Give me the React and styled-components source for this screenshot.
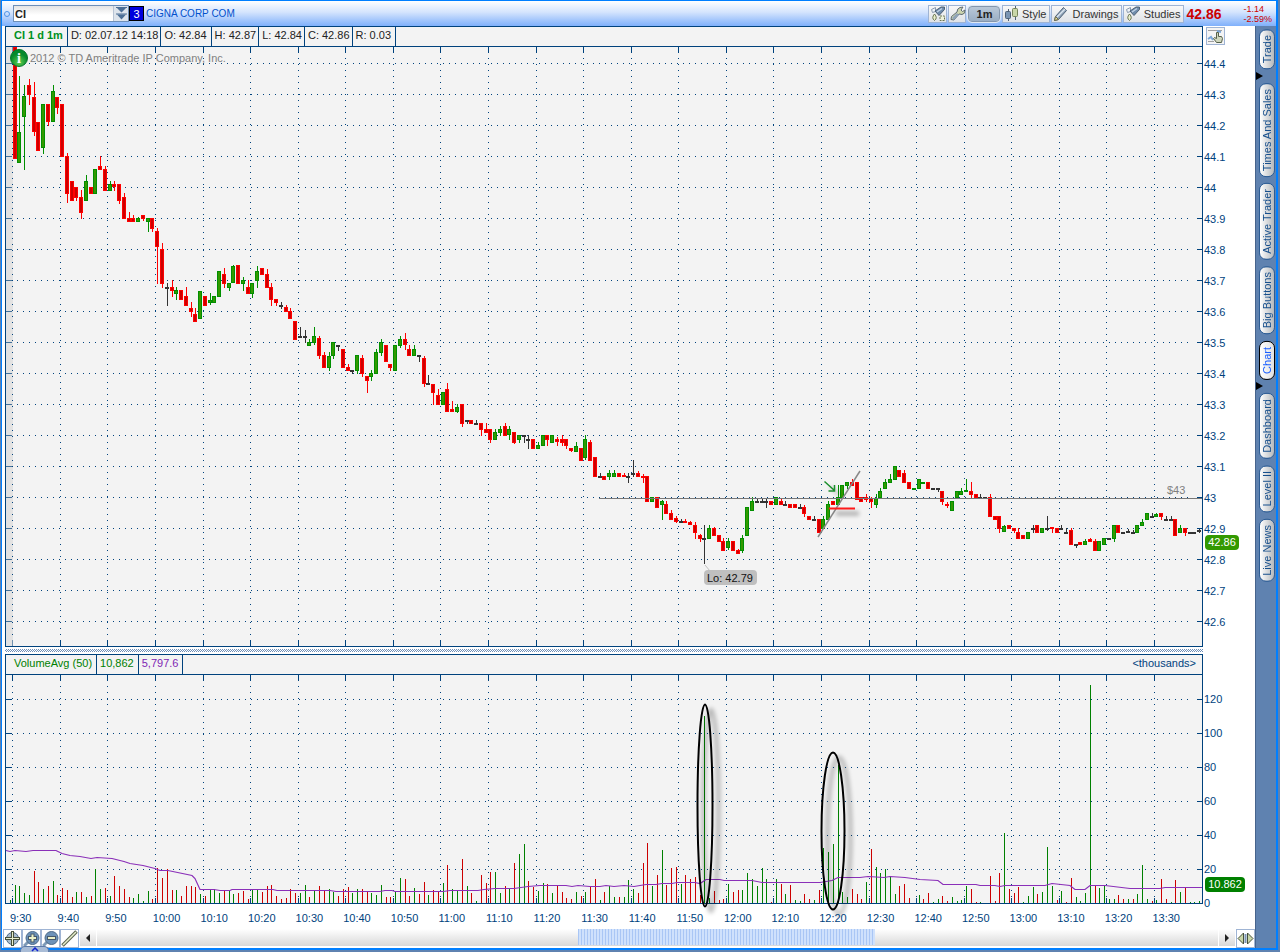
import React, { useState } from "react";
import styled, { createGlobalStyle } from "styled-components";

const GlobalStyle = createGlobalStyle`
  * {
    box-sizing: border-box;
  }
  body {
    margin: 0;
    background: #5f82b0;
    font-family: "Liberation Sans", Arial, sans-serif;
    font-size: 11px;
    color: #00427d;
  }
  button, input {
    font: inherit;
    margin: 0;
    padding: 0;
  }
`;

const NAVY = "#00427d";
const TONES = { r: "#ff0000", g: "#008f00", k: "#333333" };
const FILLS = { r: "#cc0000", g: "#339900", k: "#333333" };

// One candle per minute: color, high, body top, body bottom, low
const CANDLES = `
r 47 47 159 159|g 76 132 163 163|g 85 96 117 170|r 79 85 95 105|r 82 97 132 136|r 122 122 151 151|g 104 104 148 154|r 104 104 122 126|g 85 91 122 122|r 97 97 108 114
r 104 104 157 157|r 153 156 194 203|r 181 181 201 201|r 187 187 198 201|r 190 197 213 219|g 175 181 201 201|r 187 187 194 194|g 169 169 194 194|r 156 166 170 170|r 166 169 191 191
g 181 184 191 191|r 181 184 187 191|r 184 184 201 204|r 193 197 219 219|r 212 218 222 222|r 215 218 222 222|g 217 218 222 222|r 215 215 219 221|g 218 218 222 232|r 218 218 229 232
r 228 231 247 284|r 243 249 284 288|k 283 287 289 306|r 280 287 291 297|g 287 290 294 300|r 290 290 300 300|r 287 296 306 306|r 302 308 312 317|r 308 314 322 322|g 291 291 319 319
r 296 296 306 306|g 293 300 303 305|g 296 296 303 303|g 271 271 297 297|r 268 274 284 288|g 283 283 288 291|g 265 266 283 283|r 265 265 284 284|g 277 280 284 291|r 280 287 294 294
g 283 283 294 298|g 266 271 281 288|r 268 268 275 275|r 269 274 288 288|r 283 287 300 306|r 299 299 303 306|k 302 305 307 309|r 305 307 312 312|r 308 311 319 319|r 321 321 340 340
k 327 336 338 338|k 330 336 338 343|g 339 342 346 346|g 327 336 343 345|r 336 338 356 359|r 352 355 368 368|g 352 356 368 371|g 342 342 356 359|k 345 345 347 351|r 349 349 368 368
r 364 367 371 371|k 370 370 372 374|g 355 355 371 374|r 355 358 374 377|r 376 376 381 393|g 370 373 377 381|g 349 352 374 374|g 339 342 353 356|r 345 345 362 362|r 364 364 368 371
g 345 345 371 371|g 336 339 346 348|r 333 339 345 350|r 345 349 356 356|g 345 349 356 356|k 355 355 357 362|r 356 358 384 387|k 375 383 385 385|r 384 384 393 405|r 389 395 405 405
g 392 392 405 405|r 383 389 412 412|r 401 409 412 412|g 404 407 412 413|r 404 404 424 427|k 420 420 422 424|r 420 420 424 424|k 420 423 425 425|r 423 423 430 436|r 423 429 433 433
r 429 429 440 443|g 429 432 440 440|g 426 429 433 436|r 423 426 436 436|g 426 429 435 440|r 432 432 443 444|g 435 435 440 443|k 435 435 437 443|k 435 439 441 449|r 439 439 449 449
g 442 445 449 449|g 435 435 446 446|r 435 435 440 446|g 435 435 443 443|r 437 439 442 446|r 435 439 443 446|r 439 439 446 449|r 448 448 451 452|g 442 446 452 452|r 448 448 461 461
g 435 439 458 460|r 440 442 461 461|r 457 457 477 477|k 473 476 478 478|r 476 476 480 480|g 470 473 477 480|g 470 473 477 477|r 473 473 477 477|r 473 475 477 477|k 473 476 478 483
k 460 473 475 477|r 471 473 477 477|r 474 476 478 483|r 476 476 502 502|g 497 497 502 502|r 497 497 508 508|g 500 501 505 520|r 501 504 514 514|r 510 513 520 520|r 516 518 522 523
k 519 521 523 523|r 519 521 523 523|r 521 522 525 525|r 522 525 533 539|r 534 535 539 542|k 525 538 540 564|g 525 528 539 539|r 527 528 536 536|r 535 535 542 542|r 538 541 551 551
g 538 541 548 550|r 541 541 551 551|r 549 550 554 554|g 535 538 551 553|g 507 507 536 536|g 497 501 511 511|k 499 501 503 503|k 499 501 503 503|k 499 501 503 508|r 501 501 505 505
g 497 497 505 505|r 499 501 505 505|k 501 504 506 506|r 504 504 508 508|r 504 504 508 508|k 504 507 509 509|r 505 507 514 517|r 516 516 520 520|k 516 519 521 521|r 519 519 533 533
g 516 519 529 529|g 501 504 520 520|r 501 501 505 505|g 485 497 505 505|g 485 485 498 498|g 482 482 486 489|r 479 482 486 486|r 482 482 500 500|r 497 497 502 502|r 494 497 500 502
r 497 498 502 508|g 494 498 505 508|g 488 491 498 498|g 479 482 489 489|g 474 479 483 483|g 466 466 480 480|r 470 470 477 477|r 470 473 483 483|r 482 482 489 489|g 488 488 490 490
g 479 479 489 489|g 482 482 484 484|r 482 482 489 489|k 488 488 490 490|k 488 488 490 492|r 491 491 502 505|r 502 504 506 508|g 501 501 511 511|g 491 491 498 498|g 488 491 495 495
g 479 490 492 492|r 482 491 495 498|r 494 494 498 498|k 494 497 499 499|k 497 497 499 499|r 494 497 517 517|r 516 516 520 520|r 516 516 529 533|g 525 526 532 532|r 525 525 529 529
r 528 528 531 533|r 528 532 539 539|r 535 535 539 539|g 532 532 539 539|k 525 528 530 533|r 525 525 533 533|g 528 528 533 533|k 516 528 530 531|r 527 527 529 533|r 528 528 533 533
k 525 528 530 530|k 528 532 534 534|r 528 530 545 545|k 544 544 546 548|r 542 542 545 545|g 539 541 545 545|r 538 539 542 542|r 539 541 551 551|g 541 541 551 551|g 538 538 545 545
k 538 538 540 540|g 525 525 539 542|r 525 525 533 533|k 532 532 534 534|k 529 531 533 533|k 530 532 534 534|g 525 525 533 533|g 519 522 526 526|g 513 513 520 520|k 513 516 518 518
g 513 514 517 517|r 513 513 517 520|k 516 519 521 521|k 516 519 521 521|r 519 519 536 536|g 525 528 533 533|r 528 528 533 536|k 532 532 534 534|k 532 532 534 534|k 529 530 532 533
`
  .trim()
  .split(/[|\n]/)
  .map((row) => {
    const [tone, ...values] = row.split(" ");
    return [tone, ...values.map(Number)];
  });

// Volume per minute: color and bar height
const VOLUMES = `
g18 g17 g10 g8 r32 r21 g14 r17 g22 r8 r15 r13 r6 g11 r11 g6 r7 g34 g14 r15 g7 r27 r17 r14 r6
g5 g9 g2 g12 r4 r35 r25 r34 r13 g13 r7 r17 r17 r16 g9 r7 g14 g14 g10 r12 g12 g9 r10 r12 r4
g14 g13 r11 r17 r18 r7 r4 r5 r14 r10 g10 g18 r6 g12 r17 r12 g14 g11 r7 r14 r16 g10 g14 r14 r12
g10 g8 g18 r6 r6 g12 g25 r24 r7 g15 r9 r21 g8 r13 r11 g20 r38 g14 g12 r44 g17 r10 g2 r28 r20
r31 g31 g10 r17 g15 r40 g49 g59 r22 r16 g12 g20 r19 g10 r17 r11 r5 r4 g11 r7 g11 r17 r24 g3 r11
g17 g6 r6 g6 g23 g14 r10 r40 r60 g17 r28 g53 r18 r35 r36 g19 r28 r24 r26 r8 g187 g5 r12 r3 r4
g19 r11 r13 g13 g30 g24 g17 g35 g24 r1 g24 r19 g9 r18 g3 g2 r9 r4 g3 r13 g55 g51 g59 g138 g11
g6 r14 r9 r4 g21 r54 g36 g30 g34 g27 g9 r17 r19 r5 g0 g8 r4 r10 g1 g4 r7 r2 g6 g2 g3
g17 r14 r1 g1 g0 r27 r2 r30 g70 r14 r10 r16 g1 g7 g16 r9 g11 g56 g17 r3 g12 r1 r25 g6 g2
g10 g218 r17 g15 g17 g4 g4 r8 r4 g4 r4 g9 g38 g4 r2 g3 r24 r4 g1 r23 g11 r16 g1 g1 g2
`
  .trim()
  .split(/\s+/)
  .map((bar) => [bar[0], Number(bar.slice(1))]);

const AVERAGE =
  "6,850 10,851 15,850 26,851 33,850 56,850 62,853 70,855 80,856 91,858 97,857 112,858 124,861 130,863 143,865 155,868 160,870 168,870 192,875 195,878 200,889 214,889 220,890 230,890 232,889 273,889 277,890 330,890 336,891 380,891 385,890 392,890 395,891 443,891 450,890 478,890 484,889 495,888 514,888 528,886 540,885 566,885 572,886 578,885 590,886 600,886 606,885 614,886 624,885 634,886 640,885 646,884 656,884 662,883 672,883 677,882 695,882 700,883 706,879 720,879 724,880 752,880 762,882 820,882 832,880 838,877 860,877 868,876 884,877 890,876 905,877 920,879 938,880 943,884 976,884 980,885 995,885 1000,886 1005,885 1045,885 1052,883 1070,885 1075,889 1085,889 1090,885 1105,885 1130,888 1160,888 1165,887 1202,887";

const PRICES = Array.from({ length: 19 }, (_, i) => String((444 - i) / 10));
const VOLUME_LEVELS = [120, 100, 80, 60, 40, 20, 0];
const TIMES = Array.from({ length: 25 }, (_, i) => {
  const minutes = 570 + i * 10;
  return `${Math.floor(minutes / 60)}:${String(minutes % 60).padStart(2, "0")}`;
});

const barX = (i) => Math.floor(15 + i * 4.758);
const gridX = (i) => Math.floor(12.8 + i * 47.57) + 0.5;
const priceY = (i) => Math.floor(63 + i * 31.03) + 0.5;

// Window frame
const Page = styled.div`
  min-height: 100vh;
  padding: 0 2px 2px 1px;
  background: #5f82b0;
  position: relative;
`;

const Frame = styled.div`
  border: solid #007fff;
  border-width: 1px 2px 2px 1px;
  background: #ffffff;
`;

const TitleBar = styled.header`
  display: flex;
  align-items: center;
  height: 25px;
  padding-left: 2px;
  background: linear-gradient(#ffffff, #d4e4fd 45%, #7fb0fb);
`;

const LinkDot = styled.span`
  width: 6px;
  height: 6px;
  border: 1px solid #4f93e8;
  border-radius: 50%;
  margin-right: 3px;
`;

const SymbolBox = styled.div`
  display: flex;
  width: 116px;
  height: 17px;
  border: 1px solid #6e8fb8;
  background: linear-gradient(#e4e4e4, #ffffff 60%);
`;

const SymbolInput = styled.input`
  flex: 1;
  min-width: 0;
  border: 0;
  padding-left: 1px;
  background: transparent;
  color: #222222;
  font-weight: bold;
  outline: 0;
`;

const DropButton = styled.button`
  width: 15px;
  border: 0;
  border-left: 1px solid #b8c4d4;
  background: #dde4ec;
  line-height: 0;
`;

const GroupButton = styled.button`
  width: 15px;
  height: 15px;
  border: 1px solid #000000;
  background: #0000dd;
  color: #ffffff;
  line-height: 12px;
`;

const Company = styled.h1`
  flex: 1;
  margin: 0 0 0 2px;
  font-size: 10px;
  font-weight: normal;
  color: #0050cc;
  white-space: nowrap;
`;

const Tools = styled.div`
  display: flex;
  gap: 1px;
`;

const ToolButton = styled.button`
  display: flex;
  align-items: center;
  justify-content: space-between;
  width: ${(props) => props.$width}px;
  height: 18px;
  padding: 0 3px 0 1px;
  border: 1px solid #9fb4d4;
  background: linear-gradient(#f8f8f8, #dfe2e6);
  color: #333333;

  svg {
    flex: none;
  }
`;

const PeriodButton = styled.button`
  width: 34px;
  height: 18px;
  border: 2px solid #dfe8f2;
  outline: 1px solid #8496ac;
  outline-offset: -2px;
  border-radius: 5px;
  background: linear-gradient(#b9c8d8, #9aaec4);
  color: #222222;
  font-weight: bold;
`;

const LastPrice = styled.strong`
  width: 59px;
  padding-left: 2px;
  font-size: 14px;
  color: #cc0000;
`;

const Change = styled.div`
  margin-right: 4px;
  font-size: 9px;
  line-height: 10px;
  color: #cc0000;
  white-space: nowrap;
`;

// Body
const Body = styled.div`
  display: grid;
  grid-template-columns: minmax(0, 1fr) 21px;
`;

const Workspace = styled.main`
  min-width: 0;
`;

const PlotRow = styled.section`
  display: grid;
  grid-template-columns: minmax(0, 1fr) 52px;
  padding-left: 3px;
`;

const Panel = styled.div`
  border: 1px solid ${NAVY};
  background: #f3f3f3;

  > svg {
    display: block;
    width: 100%;
    height: auto;
    overflow: visible;
  }
`;

const InfoStrip = styled.div`
  display: flex;
  height: 20px;
  border-bottom: 1px solid ${NAVY};
  padding-left: 5px;
  line-height: 17px;
  white-space: nowrap;
`;

const InfoCell = styled.span`
  padding: 0 ${(props) => (props.$roomy ? 4 : 2)}px 0 3px;
  border-right: 1px solid ${NAVY};
  color: ${(props) => props.$color || "#222222"};
  font-weight: ${(props) => (props.$bold ? "bold" : "normal")};
`;

const Units = styled.span`
  margin-left: auto;
  padding-right: 6px;
`;

const AxisColumn = styled.div`
  position: relative;
  display: flex;
  flex-direction: column;
  padding: ${(props) => props.$padding};
`;

const AxisLabel = styled.span`
  flex: 1;
  display: flex;
  align-items: center;
  padding-left: 1px;
`;

const AxisBadge = styled.span`
  position: absolute;
  left: 2px;
  top: ${(props) => props.$top};
  width: ${(props) => props.$width}px;
  height: 15px;
  border-radius: 4px;
  background: ${(props) => props.$color};
  color: #ffffff;
  line-height: 15px;
  text-align: center;
`;

const PinButton = styled.button`
  position: absolute;
  left: 3px;
  top: 1px;
  width: 19px;
  height: 18px;
  border: 1px solid #9fb4d4;
  background: #f4f4f4;
  line-height: 0;
`;

const Splitter = styled.div`
  height: 7px;
  margin: 0 52px 0 3px;
  padding: 2px 0;
  background: repeating-conic-gradient(#6f8fb8 0 25%, #ffffff 0 50%) 0 0 / 2px 2px
    content-box;
`;

const TimeAxis = styled.div`
  display: grid;
  grid-template-columns: repeat(25, minmax(0, 1fr));
  height: 25px;
  padding: 0 3px 0 5px;
  line-height: 28px;
  white-space: nowrap;
`;

const BottomBar = styled.footer`
  display: flex;
  height: 19px;
  padding-left: 1px;
`;

const IconButton = styled.button`
  width: 19px;
  height: 19px;
  border: 1px solid #9fb4d4;
  background: #ffffff;
  line-height: 0;
`;

const ScrollButton = styled.button`
  width: 16px;
  height: 17px;
  margin: 0 1px;
  border: 0;
  background: linear-gradient(#ffffff, #d8d8d8);
  line-height: 0;
`;

const ScrollTrack = styled.div`
  flex: 1;
  height: 17px;
  background: linear-gradient(#ffffff, #d8d8d8);
`;

const ScrollThumb = styled.div`
  height: 16px;
  background: repeating-linear-gradient(90deg, #a9c6f5 0 1px, #cfe1fc 1px 3px);
`;

const SideTabs = styled.nav`
  display: flex;
  flex-direction: column;
  align-items: center;
  padding-top: 3px;
  border-left: 1px solid #47648c;
  background: #5f82b0;
`;

const TabGroup = styled.div`
  display: flex;
  flex-direction: column;
  gap: 6px;
  padding-left: 2px;
`;

const Tab = styled.button`
  width: 16px;
  padding: 5px 0;
  border: 1px solid ${(props) => (props.$active ? "#000000" : "#2c5c94")};
  border-radius: 7px;
  background: ${(props) =>
    props.$active
      ? "linear-gradient(270deg, #ffffff, #e0e0e0)"
      : "linear-gradient(270deg, #ffffff, #b4b8bc)"};
  color: ${(props) => (props.$active ? "#1a5fff" : "#174f8c")};
  line-height: 14px;
  white-space: nowrap;
  writing-mode: vertical-rl;
  transform: rotate(180deg);
`;

const GroupMark = styled.svg`
  align-self: flex-start;
  display: block;
`;

const DrawerTab = styled.button`
  position: absolute;
  left: 20px;
  bottom: 0;
  width: 29px;
  height: 6px;
  border: 1px solid #5d7ba8;
  border-bottom: 0;
  border-radius: 5px 5px 0 0;
  background: #a9bcd6;
  line-height: 0;
`;

const FlaskIcon = ({ gear }) => (
  <svg width="16" height="16" viewBox="0 0 16 16">
    <path d="M1.500 3.500l4-2v4l-3 1z" fill="#eef3f8" stroke="#8a9bb0" />
    <path d="M5 5l6-4h3.500v2.500L9 9.500z" fill="#6f8cab" stroke="#4d6075" />
    <path d="M7 6l5-3.500" stroke="#c2d2e4" strokeWidth="1.500" />
    <path d="M4.500 8q3.500 4 0 6.500-3.500-2.500 0-6.500z" fill="#e8eecb" stroke="#6a7450" />
    {gear && (
      <rect
        x="10"
        y="10"
        width="4.500"
        height="4.500"
        fill="#eef2dc"
        stroke="#6a7450"
        strokeDasharray="2 1"
      />
    )}
  </svg>
);

const WrenchIcon = () => (
  <svg width="16" height="16" viewBox="0 0 16 16">
    <path
      d="M10 1.500 13 1l-2 3 1.500 1.500L15 4q.500 4-3 4.500L9 8l-5 6-3-.500.500-3L7 6q0-3.500 3-4.500z"
      fill="#cdd5ae"
      stroke="#5f6b74"
    />
    <path d="M2 12l5-5 2 2-5 5z" fill="#8fa3b8" />
  </svg>
);

const CandlesIcon = () => (
  <svg width="15" height="16" viewBox="0 0 15 16">
    <path d="M4.500 3v12M11.500 0v14" stroke="#4d6075" />
    <rect x="1.500" y="5.500" width="5" height="7" rx="1" fill="#7b95b3" stroke="#4d6075" />
    <rect x="8.500" y="2.500" width="5" height="8" rx="1" fill="#c9d6a8" stroke="#76845a" />
  </svg>
);

const PencilIcon = () => (
  <svg width="15" height="16" viewBox="0 0 15 16">
    <path d="M1.500 14.500l1-4 8-9 3 3-8 9z" fill="#8fa3b8" stroke="#4d6075" />
    <path d="M4 11l8-8" stroke="#dbe5ee" strokeWidth="1.500" />
    <path d="M1.500 14.500l1-4 3 3z" fill="#e5dc9a" stroke="#6a6a4a" />
  </svg>
);

const MagnifierIcon = ({ plus }) => (
  <svg width="17" height="17" viewBox="0 0 17 17">
    <path d="M5 12l-4 4" stroke="#7f9bb8" strokeWidth="3" />
    <circle cx="9.500" cy="8" r="6.500" fill="#6d92b8" stroke="#4d6a88" />
    <path
      d={plus ? "M5 8h9M9.500 3.500v9" : "M5 8h9"}
      stroke="#46586a"
      strokeWidth="4"
    />
    <path d={plus ? "M6 8h7M9.500 4.500v7" : "M6 8h7"} stroke="#eef2c8" strokeWidth="2" />
  </svg>
);

const PriceChart = () => (
  <svg viewBox="6 47 1196 599" role="img" aria-label="CI one minute price chart">
    <defs>
      <filter id="soft" filterUnits="userSpaceOnUse" x="820" y="475" width="60" height="55">
        <feGaussianBlur stdDeviation="2" />
      </filter>
      <radialGradient id="infoGreen" cx="50%" cy="75%">
        <stop offset="0" stopColor="#5fd04f" />
        <stop offset="1" stopColor="#068a2c" />
      </radialGradient>
    </defs>
    <rect x="6" y="47" width="7" height="599" fill="#e2e2e2" />
    <g stroke={NAVY} shapeRendering="crispEdges">
      {TIMES.map((time, i) => (
        <g key={time}>
          <path d={`M${gridX(i)} 47v6M${gridX(i)} 640v6`} opacity={i ? 1 : 0.5} />
          <path d={`M${gridX(i)} 52V640`} strokeDasharray="1 5" />
        </g>
      ))}
      {PRICES.map((price, i) => (
        <g key={price}>
          <path d={`M6 ${priceY(i)}h6`} opacity="0.7" />
          <path d={`M1197 ${priceY(i)}h5`} />
          <path d={`M17 ${priceY(i)}H1188`} strokeDasharray="1 5" />
        </g>
      ))}
    </g>
    <g shapeRendering="crispEdges">
      {CANDLES.map(([tone, high, top, bottom, low], i) => (
        <g key={i}>
          <rect x={barX(i)} y={high} width="1" height={low - high} fill={TONES[tone]} />
          <rect x={barX(i) - 2} y={top} width="4" height={bottom - top} fill={TONES[tone]} />
          <rect
            x={barX(i) - 1}
            y={top + 1}
            width="2"
            height={Math.max(bottom - top - 2, 0)}
            fill={FILLS[tone]}
          />
        </g>
      ))}
    </g>
    <path d="M599 498.500H1202" stroke="#777777" shapeRendering="crispEdges" />
    <text x="1167" y="494" fontSize="11" fill="#808080">
      $43
    </text>
    <path d="M818 537L860 471" stroke="#888888" strokeWidth="1.500" />
    <g stroke="#000000" opacity="0.3" strokeWidth="4" filter="url(#soft)">
      <path d="M836 513.500H859" />
      <path d="M830 487l10 8" strokeWidth="2" />
    </g>
    <path d="M829 508.500H855" stroke="#ff1a1a" strokeWidth="2" />
    <path d="M824.500 481.500l10 9M834.500 485v6h-6" fill="none" stroke="#1c8f2c" strokeWidth="1.500" />
    <path d="M705 565l5 6" stroke="#c0c0c0" />
    <rect x="704" y="570" width="53" height="15" rx="4" fill="#bfbfbf" />
    <text x="707" y="582" fontSize="11" fill="#111111">
      Lo: 42.79
    </text>
    <text x="30" y="62" fontSize="11" fill="#808080">
      2012 © TD Ameritrade IP Company, Inc.
    </text>
    <circle cx="19" cy="58" r="8.500" fill="url(#infoGreen)" stroke="#05752a" />
    <text
      x="19"
      y="63"
      fontSize="14"
      fontWeight="bold"
      fontFamily="Liberation Serif, serif"
      textAnchor="middle"
      fill="#ffffff"
    >
      i
    </text>
  </svg>
);

const Marker = ({ cx, cy, rx, ry }) => (
  <g fill="none">
    <ellipse
      cx={cx + 6}
      cy={cy + 5}
      rx={rx}
      ry={ry}
      stroke="#000000"
      strokeWidth="4"
      opacity="0.25"
      filter="url(#haze)"
    />
    <ellipse cx={cx} cy={cy} rx={rx} ry={ry} stroke="#000000" strokeWidth="2" />
  </g>
);

const VolumeChart = () => (
  <svg viewBox="6 675 1196 228" role="img" aria-label="Volume chart">
    <defs>
      <filter id="haze" x="-100%" y="-10%" width="300%" height="120%">
        <feGaussianBlur stdDeviation="2" />
      </filter>
    </defs>
    <g stroke={NAVY} shapeRendering="crispEdges">
      {TIMES.map((time, i) => (
        <g key={time}>
          <path d={`M${gridX(i)} 675v6M${gridX(i)} 898v5`} />
          <path d={`M${gridX(i)} 686V898`} strokeDasharray="1 5" />
        </g>
      ))}
      {VOLUME_LEVELS.slice(0, 6).map((level, i) => (
        <g key={level}>
          <path d={`M6 ${699.5 + i * 34}h6M1197 ${699.5 + i * 34}h5`} />
          <path d={`M17 ${699.5 + i * 34}H1188`} strokeDasharray="1 5" />
        </g>
      ))}
    </g>
    <g shapeRendering="crispEdges">
      <rect x="10" y="900" width="1" height="3" fill="#008000" />
      {VOLUMES.map(([tone, height], i) => (
        <rect
          key={i}
          x={barX(i)}
          y={903 - height}
          width="1"
          height={height}
          fill={tone === "g" ? "#008000" : "#cc0000"}
        />
      ))}
    </g>
    <polyline
      points={AVERAGE}
      transform="translate(0 0.5)"
      fill="none"
      stroke="#8a2fb8"
      strokeWidth="1.200"
    />
    <Marker cx={705} cy={805.5} rx={7.5} ry={101} />
    <Marker cx={833} cy={831} rx={11.5} ry={78.5} />
  </svg>
);

const TAB_GROUPS = [
  ["Trade"],
  ["Times And Sales", "Active Trader", "Big Buttons", "Chart"],
  ["Dashboard", "Level II", "Live News"],
];

const App = () => {
  const [symbol, setSymbol] = useState("CI");
  const [activeTab, setActiveTab] = useState("Chart");

  return (
    <Page>
      <GlobalStyle />
      <Frame>
        <TitleBar>
          <LinkDot />
          <SymbolBox>
            <SymbolInput
              aria-label="Symbol"
              value={symbol}
              onChange={(e) => setSymbol(e.target.value)}
            />
            <DropButton aria-label="Recent symbols">
              <svg width="13" height="13" viewBox="0 0 13 13">
                <path d="M1 .5h11M1 7h11" stroke="#4c6f96" />
                <path d="M2 1h9L6.500 5.500zM2 7.500h9L6.500 12.500z" fill="#4c6f96" />
              </svg>
            </DropButton>
          </SymbolBox>
          <GroupButton aria-label="Link group 3">3</GroupButton>
          <Company>CIGNA CORP COM</Company>
          <Tools>
            <ToolButton $width={19} aria-label="Edit studies">
              <FlaskIcon gear />
            </ToolButton>
            <ToolButton $width={18} aria-label="Chart settings">
              <WrenchIcon />
            </ToolButton>
            <PeriodButton>1m</PeriodButton>
            <ToolButton $width={48}>
              <CandlesIcon />
              Style
            </ToolButton>
            <ToolButton $width={71}>
              <PencilIcon />
              Drawings
            </ToolButton>
            <ToolButton $width={61}>
              <FlaskIcon />
              Studies
            </ToolButton>
          </Tools>
          <LastPrice>42.86</LastPrice>
          <Change>
            -1.14
            <br />
            -2.59%
          </Change>
        </TitleBar>

        <Body>
          <Workspace>
            <PlotRow>
              <Panel>
                <InfoStrip>
                  <InfoCell $bold $roomy $color="#009020">
                    CI 1 d 1m
                  </InfoCell>
                  <InfoCell>D: 02.07.12 14:18</InfoCell>
                  <InfoCell $roomy>O: 42.84</InfoCell>
                  <InfoCell>H: 42.87</InfoCell>
                  <InfoCell>L: 42.84</InfoCell>
                  <InfoCell>C: 42.86</InfoCell>
                  <InfoCell $roomy>R: 0.03</InfoCell>
                </InfoStrip>
                <PriceChart />
              </Panel>
              <AxisColumn $padding="22px 0 9px">
                <PinButton aria-label="Pan chart">
                  <svg width="17" height="16" viewBox="0 0 17 16">
                    <path d="M1 2.500h14M1 13.500h6" stroke="#a0a0a0" />
                    <path d="M1 11l3-2 2 3M10 3l4 1" fill="none" stroke="#7aa6d8" strokeWidth="2" />
                    <path
                      d="M9.500 14.500l-3-4 1-1 2 1v-6h2v4h3l1 2-1 4z"
                      fill="#cfd6bd"
                      stroke="#55604a"
                    />
                  </svg>
                </PinButton>
                {PRICES.map((price) => (
                  <AxisLabel key={price}>{price}</AxisLabel>
                ))}
                <AxisBadge $top="82%" $width={34} $color="#339900">
                  42.86
                </AxisBadge>
              </AxisColumn>
            </PlotRow>

            <Splitter />

            <PlotRow>
              <div>
                <Panel>
                  <InfoStrip>
                    <InfoCell $roomy $color="#008000">
                      VolumeAvg (50)
                    </InfoCell>
                    <InfoCell $roomy $color="#008000">
                      10,862
                    </InfoCell>
                    <InfoCell $roomy $color="#7f26b3">
                      5,797.6
                    </InfoCell>
                    <Units>&lt;thousands&gt;</Units>
                  </InfoStrip>
                  <VolumeChart />
                </Panel>
                <TimeAxis>
                  {TIMES.map((time) => (
                    <span key={time}>{time}</span>
                  ))}
                </TimeAxis>
              </div>
              <AxisColumn $padding="28px 0 9px">
                {VOLUME_LEVELS.map((level) => (
                  <AxisLabel key={level}>{level}</AxisLabel>
                ))}
                <AxisBadge $top="81%" $width={40} $color="#008000">
                  10.862
                </AxisBadge>
              </AxisColumn>
            </PlotRow>

            <BottomBar>
              <IconButton aria-label="Crosshair">
                <svg width="17" height="17" viewBox="0 0 17 17">
                  <circle cx="8.500" cy="8.500" r="6" fill="#a9bccd" stroke="#4d6a88" />
                  <path d="M1 8.500h15M8.500 1v15" stroke="#45503c" strokeWidth="3" />
                  <path d="M2 8.500h13M8.500 2v13" stroke="#e8efcd" />
                </svg>
              </IconButton>
              <IconButton aria-label="Zoom in">
                <MagnifierIcon plus />
              </IconButton>
              <IconButton aria-label="Zoom out">
                <MagnifierIcon />
              </IconButton>
              <IconButton aria-label="Draw line">
                <svg width="17" height="17" viewBox="0 0 17 17">
                  <path d="M1.500 15.500L15.500 1.500" stroke="#5c6650" strokeWidth="3.500" />
                  <path d="M2 15L15 2" stroke="#e8efcd" strokeWidth="1.500" />
                </svg>
              </IconButton>
              <ScrollButton aria-label="Scroll left">
                <svg width="8" height="10" viewBox="0 0 8 10">
                  <path d="M6 1v8L2 5z" fill="#222222" />
                </svg>
              </ScrollButton>
              <ScrollTrack>
                <ScrollThumb style={{ width: "26.5%", marginLeft: "42.9%" }} />
              </ScrollTrack>
              <ScrollButton aria-label="Scroll right">
                <svg width="8" height="10" viewBox="0 0 8 10">
                  <path d="M2 1v8l4-4z" fill="#222222" />
                </svg>
              </ScrollButton>
              <IconButton aria-label="Fit to width">
                <svg width="17" height="17" viewBox="0 0 17 17">
                  <path d="M6.500 3v11L1 8.500zM10.500 3v11L16 8.500z" fill="#c9d6a8" stroke="#45503c" />
                  <path d="M8.500 4v9" stroke="#7b95b3" strokeWidth="2" />
                </svg>
              </IconButton>
            </BottomBar>
          </Workspace>

          <SideTabs>
            {TAB_GROUPS.map((tabs, i) => (
              <React.Fragment key={tabs[0]}>
                {i > 0 && (
                  <GroupMark width="8" height="14" viewBox="0 0 8 14">
                    <path d="M0 3v8l7-4z" fill="#000000" />
                  </GroupMark>
                )}
                <TabGroup>
                  {tabs.map((tab) => (
                    <Tab
                      key={tab}
                      $active={tab === activeTab}
                      onClick={() => setActiveTab(tab)}
                    >
                      {tab}
                    </Tab>
                  ))}
                </TabGroup>
              </React.Fragment>
            ))}
          </SideTabs>
        </Body>
      </Frame>
      <DrawerTab aria-label="Open drawer">
        <svg width="8" height="5" viewBox="0 0 8 5">
          <path d="M1 4l3-3 3 3" fill="none" stroke="#1020d0" strokeWidth="1.500" />
        </svg>
      </DrawerTab>
    </Page>
  );
};

export default App;
